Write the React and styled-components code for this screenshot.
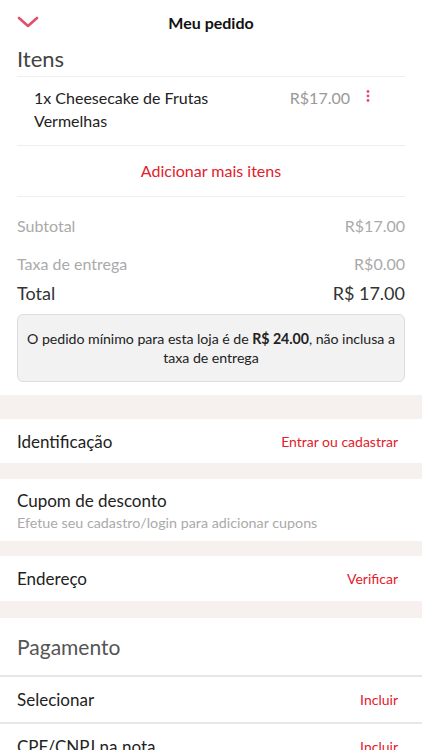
import React from "react";
import styled, { createGlobalStyle } from "styled-components";

const GlobalStyle = createGlobalStyle`
  body {
    margin: 0;
    background: #fff;
    font-family: "Lato", "Open Sans", sans-serif;
    color: #222;
  }
`;

const RED = "#e3202b";
const PINK = "#e0506a";
const BAND = "#f6f1ee";

const Page = styled.div`
  width: 422px;
  overflow: hidden;
`;

const TopBar = styled.header`
  display: grid;
  grid-template-columns: 40px 1fr 40px;
  align-items: center;
  height: 44px;
  padding: 0 17px;
`;

const Title = styled.h1`
  margin: 0;
  text-align: center;
  font-size: 16px;
  font-weight: 700;
  color: #111;
`;

const BackButton = styled.button`
  display: flex;
  align-items: center;
  padding: 0;
  border: 0;
  background: none;
  height: 44px;
`;

const Block = styled.section`
  padding: 0 17px;
`;

const BlockTitle = styled.h2`
  margin: 0;
  font-size: 22px;
  font-weight: 400;
  color: #444;
  line-height: 30px;
  padding-bottom: 2px;
  border-bottom: 1px solid #eee;
`;

const ItemRow = styled.div`
  display: flex;
  align-items: flex-start;
  padding: 9px 19px 13px 17px;
  border-bottom: 1px solid #eee;
`;

const ItemName = styled.div`
  flex: 1;
  max-width: 200px;
  font-size: 16px;
  line-height: 23px;
  color: #222;
`;

const ItemPrice = styled.div`
  margin-left: auto;
  font-size: 16px;
  line-height: 23px;
  color: #999;
`;

const Kebab = styled.div`
  width: 36px;
  display: flex;
  justify-content: center;
  padding-top: 4px;
`;

const AddMore = styled.div`
  text-align: center;
  color: ${RED};
  font-size: 16px;
  line-height: 50px;
  border-bottom: 1px solid #eee;
`;

const SumRow = styled.div`
  display: flex;
  justify-content: space-between;
  align-items: center;
  font-size: ${(p) => (p.$total ? "18px" : "16px")};
  color: ${(p) => (p.$total ? "#333" : "#aaa")};
  height: ${(p) => p.$h}px;
`;

const Notice = styled.div`
  margin: 4px 0 13px;
  background: #f2f2f2;
  border: 1px solid #ddd;
  border-radius: 6px;
  padding: 14px 0;
  text-align: center;
  font-size: 14.2px;
  letter-spacing: -0.05px;
  line-height: 19px;
  color: #222;

  b {
    font-weight: 700;
  }
`;

const Band = styled.div`
  background: ${BAND};
  height: ${(p) => p.$h}px;
`;

const Row = styled.div`
  display: flex;
  justify-content: space-between;
  align-items: center;
  height: ${(p) => p.$h || 44}px;
  padding: 0 24px 0 17px;
  border-bottom: ${(p) => (p.$line ? "2px solid #e8e8e8" : "none")};
`;

const RowLabel = styled.div`
  font-size: 17px;
  color: #222;
`;

const RowAction = styled.div`
  font-size: 14px;
  color: ${RED};
`;

const Coupon = styled.div`
  display: flex;
  flex-direction: column;
  justify-content: center;
  height: 62px;
  padding: 0 17px;
`;

const Hint = styled.div`
  font-size: 14.3px;
  color: #aaa;
  margin-top: 3px;
`;

const PayTitle = styled.div`
  display: flex;
  align-items: center;
  height: 57px;
  padding: 0 17px;
  font-size: 21px;
  color: #555;
  border-bottom: 2px solid #e6e6e6;
`;

const Chevron = () => (
  <svg width="22" height="12" viewBox="0 0 22 12">
    <path d="M2 2 L11 10 L20 2" fill="none" stroke={PINK} strokeWidth="2.6" strokeLinecap="round" strokeLinejoin="round" />
  </svg>
);

const Dots = () => (
  <svg width="4" height="12" viewBox="0 0 4 12">
    <circle cx="2" cy="1.5" r="1.4" fill={PINK} />
    <circle cx="2" cy="6" r="1.4" fill={PINK} />
    <circle cx="2" cy="10.5" r="1.4" fill={PINK} />
  </svg>
);

export default function App() {
  return (
    <Page>
      <GlobalStyle />
      <TopBar>
        <BackButton aria-label="Fechar">
          <Chevron />
        </BackButton>
        <Title>Meu pedido</Title>
        <span />
      </TopBar>

      <Block>
        <BlockTitle>Itens</BlockTitle>
        <ItemRow>
          <ItemName>1x Cheesecake de Frutas Vermelhas</ItemName>
          <ItemPrice>R$17.00</ItemPrice>
          <Kebab>
            <Dots />
          </Kebab>
        </ItemRow>
        <AddMore>Adicionar mais itens</AddMore>

        <SumRow $h={49} style={{ paddingTop: 4 }}>
          <span>Subtotal</span>
          <span>R$17.00</span>
        </SumRow>
        <SumRow $h={26}>
          <span>Taxa de entrega</span>
          <span>R$0.00</span>
        </SumRow>
        <SumRow $total $h={34}>
          <span>Total</span>
          <span>R$ 17.00</span>
        </SumRow>
        <Notice>
          O pedido mínimo para esta loja é de <b>R$ 24.00</b>, não inclusa a taxa de entrega
        </Notice>
      </Block>

      <Band $h={24} />
      <Row $h={44}>
        <RowLabel>Identificação</RowLabel>
        <RowAction>Entrar ou cadastrar</RowAction>
      </Row>
      <Band $h={16} />
      <Coupon>
        <RowLabel>Cupom de desconto</RowLabel>
        <Hint>Efetue seu cadastro/login para adicionar cupons</Hint>
      </Coupon>
      <Band $h={15} />
      <Row $h={45}>
        <RowLabel>Endereço</RowLabel>
        <RowAction>Verificar</RowAction>
      </Row>
      <Band $h={17} />
      <PayTitle>Pagamento</PayTitle>
      <Row $h={45} $line>
        <RowLabel>Selecionar</RowLabel>
        <RowAction>Incluir</RowAction>
      </Row>
      <Row $h={44}>
        <RowLabel>CPF/CNPJ na nota</RowLabel>
        <RowAction>Incluir</RowAction>
      </Row>
    </Page>
  );
}
